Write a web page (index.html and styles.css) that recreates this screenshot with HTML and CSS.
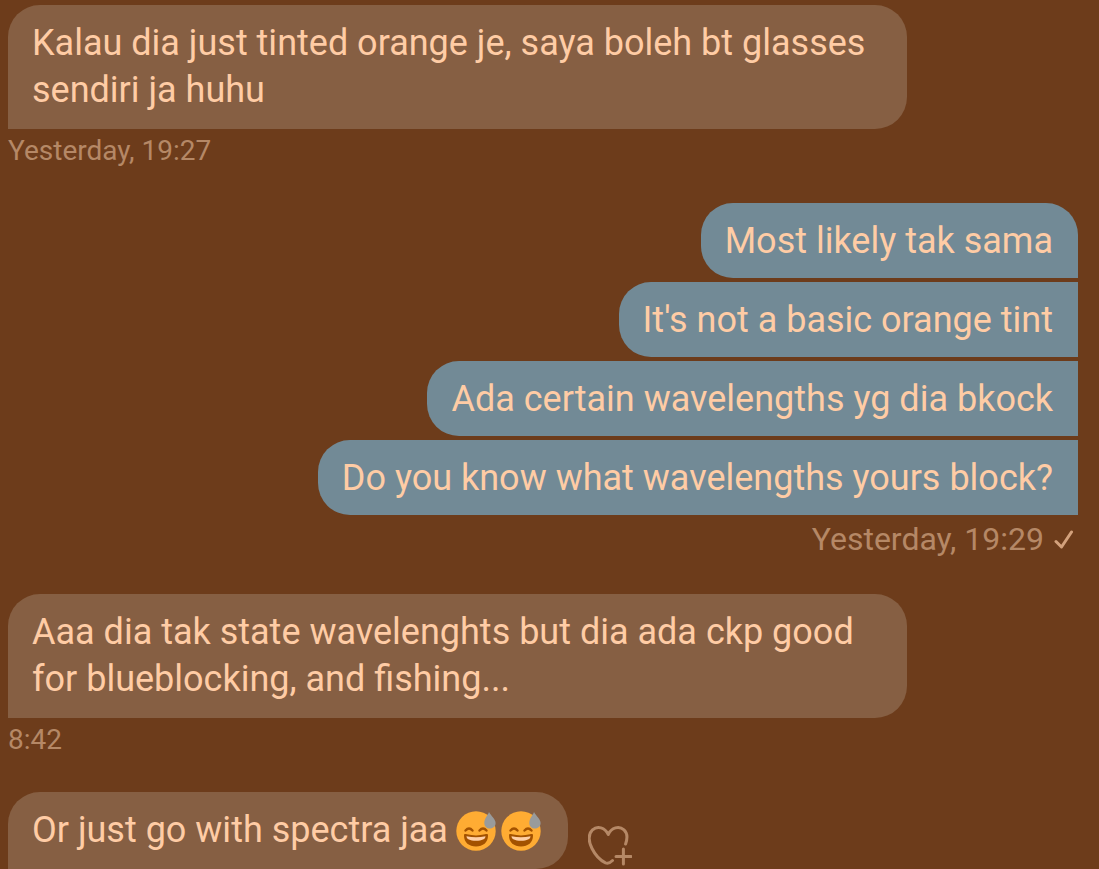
FILE: index.html
```html
<!DOCTYPE html>
<html lang="ms">
<head>
<meta charset="utf-8">
<meta name="viewport" content="width=device-width, initial-scale=1">
<title>Messages</title>
<link rel="stylesheet" href="styles.css">
</head>
<body>
<svg width="0" height="0" class="defs" aria-hidden="true">
  <symbol id="sweat" viewBox="0 0 40 40">
    <circle cx="20" cy="20" r="19.700" fill="#ffac33"/>
    <path d="M9.500 19.500Q13 15.500 16.500 19.500M23.500 19.500Q27 15.500 30.500 19.500" fill="none" stroke="#a35200" stroke-width="2.400" stroke-linecap="round"/>
    <path d="M8 24.500C8 22.800 9 22.800 11 23.300Q20 25.500 29 23.300C31 22.800 32 22.800 32 24.500C32 31.500 27 35.500 20 35.500S8 31.500 8 24.500Z" fill="#a35200"/>
    <path d="M10.500 25.200Q20 27.500 29.500 25.200C29.500 28 26 29.700 20 29.700S10.500 28 10.500 25.200Z" fill="#ffcfa6"/>
    <path d="M33 1C31.500 5 28.300 7.500 28.300 12C28.300 15.500 30.800 17.500 34 17.500S39.600 15.200 39.600 12C39.600 8 35 5 33 1Z" fill="#999b9c"/>
  </symbol>
</svg>
<main class="chat">
  <section class="group received">
    <p class="bubble">Kalau dia just tinted orange je, saya boleh bt glasses sendiri ja huhu</p>
    <time class="stamp">Yesterday, 19:27</time>
  </section>
  <section class="group sent">
    <p class="bubble">Most likely tak sama</p>
    <p class="bubble">It's not a basic orange tint</p>
    <p class="bubble">Ada certain wavelengths yg dia bkock</p>
    <p class="bubble">Do you know what wavelengths yours block?</p>
    <div class="stamp">
      <time>Yesterday, 19:29</time>
      <svg class="check" viewBox="0 0 20 20" role="img" aria-label="Sent"><path d="M2 11.500 7.500 17 17.500 2"/></svg>
    </div>
  </section>
  <section class="group received">
    <p class="bubble">Aaa dia tak state wavelenghts but dia ada ckp good for blueblocking, and fishing...</p>
    <time class="stamp">8:42</time>
  </section>
  <section class="group received">
    <div class="row">
      <p class="bubble with-emoji">Or just go with spectra jaa<span class="emojis"><svg class="emoji" role="img" aria-label="Grinning face with sweat"><use href="#sweat"/></svg><svg class="emoji" role="img" aria-label="Grinning face with sweat"><use href="#sweat"/></svg></span></p>
      <button class="react" type="button" aria-label="Add reaction">
        <svg class="heart" viewBox="0 0 44 40"><path d="M37.600 18C39.500 12.500 39.500 7 36 3.800C31 -.5 23.500 1.500 20.200 8.500C17 1.500 9.500 -.5 4.500 3.800C0 8.500 .8 16 4 22.500C7.500 29.500 12.500 34.500 17.500 36.800C20 37.800 22.500 36.500 24.500 34.500M35.400 23V38M28 30.500H43"/></svg>
      </button>
    </div>
  </section>
</main>
</body>
</html>
```
FILE: styles.css
```css
* { box-sizing: border-box; }
body {
  margin: 0;
  background: #6d3c1b;
  color: #ffcca5;
  font: 36px/47px Roboto, sans-serif;
}
.defs { position: absolute; }
.chat {
  display: flex;
  flex-direction: column;
  gap: 34px;
  padding: 5px 21px 0 8px;
}
.group {
  display: flex;
  flex-direction: column;
  align-items: flex-start;
  gap: 4px;
}
.sent { align-items: flex-end; }
.bubble {
  max-width: 84%;
  margin: 0;
  padding: 15px 24px;
  border-radius: 32px 32px 32px 0;
  background: #865f43;
}
.sent .bubble {
  padding: 15px 25px 13px 24px;
  border-radius: 32px 0 0 32px;
  background: #728a96;
}
.sent .bubble:first-child { border-top-right-radius: 32px; }
.stamp {
  color: #b58866;
  font-size: 28px;
  line-height: 36px;
}
.sent .stamp {
  display: flex;
  align-items: center;
  gap: 10px;
  padding-right: 4px;
  font-size: 32px;
  line-height: 41px;
}
.check {
  width: 20px;
  height: 20px;
  fill: none;
  stroke: #d3a17c;
  stroke-width: 3;
  stroke-linecap: round;
  stroke-linejoin: round;
}
.row {
  display: flex;
  align-items: flex-end;
  gap: 20px;
  width: 100%;
}
.with-emoji {
  display: flex;
  align-items: center;
}
.emojis {
  display: flex;
  gap: 5px;
  padding: 0 3px 0 8px;
}
.emoji {
  width: 40px;
  height: 40px;
}
.react {
  display: flex;
  padding: 0 0 3px;
  border: 0;
  background: none;
  cursor: pointer;
}
.heart {
  width: 44px;
  height: 40px;
  fill: none;
  stroke: #b58866;
  stroke-width: 3;
  stroke-linecap: round;
  stroke-linejoin: round;
}
```
